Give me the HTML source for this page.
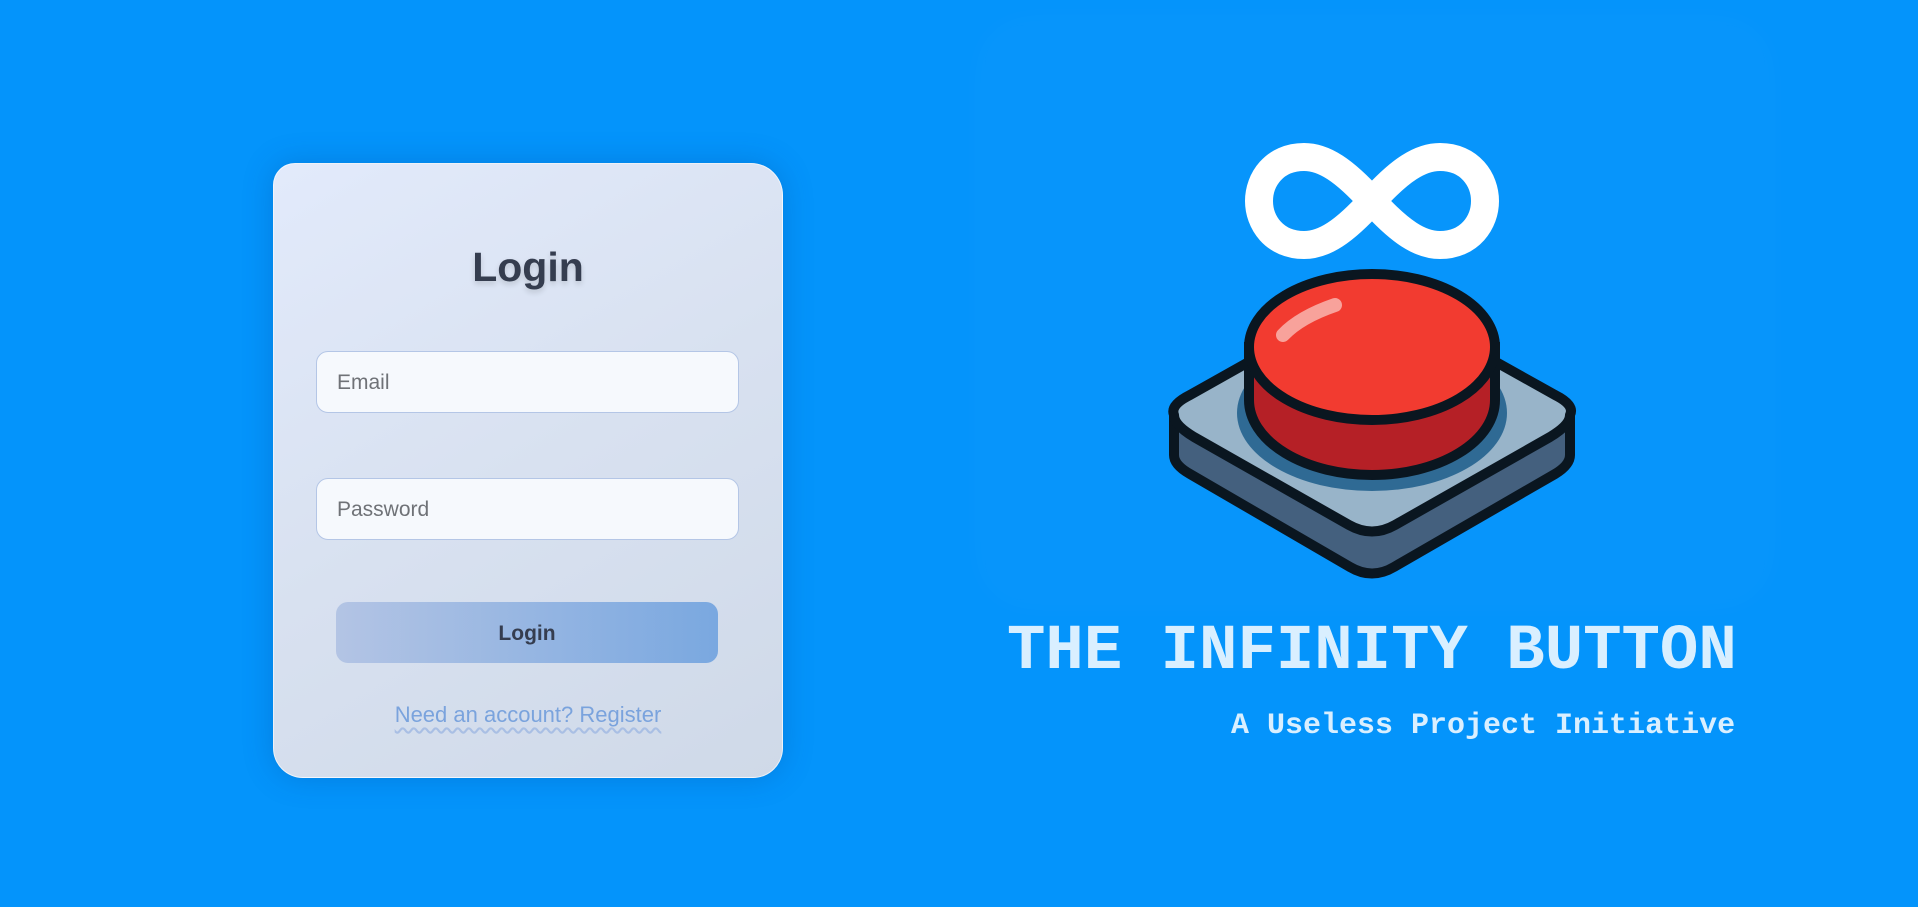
<!DOCTYPE html>
<html><head><meta charset="utf-8"><style>
html,body{margin:0;padding:0}
body{width:1918px;height:907px;background:#0494fb;position:relative;overflow:hidden;font-family:"Comic Sans MS","Liberation Sans",sans-serif}
.glow{position:absolute;left:985px;top:25px;width:780px;height:575px;border-radius:40px;background:rgba(255,255,255,0.015);box-shadow:0 0 40px rgba(255,255,255,0.04)}
.card{position:absolute;left:273px;top:163px;width:510px;height:615px;border-radius:22px 32px 30px 30px;background:linear-gradient(150deg,#e2eafb 0%,#d8e1f0 50%,#cfd9e8 100%);box-shadow:0 0 30px rgba(0,60,140,0.25);border:1px solid rgba(255,255,255,0.6);box-sizing:border-box}
.title{position:absolute;top:244px;text-align:center;font-size:41px;font-weight:bold;color:#353d4f;text-shadow:0 3px 6px rgba(0,0,0,0.15)}
.inp{position:absolute;left:316px;width:423px;height:62px;border:1px solid #b4c6e6;border-radius:12px;background:#f6f9fd;box-sizing:border-box;padding-left:20px;font-size:21px;color:#6f7277;line-height:62px}
.btn{position:absolute;left:336px;top:602px;width:382px;height:61px;border-radius:12px;background:linear-gradient(90deg,#b3c4e4,#7aa8e0);text-align:center;line-height:64px;font-size:21px;font-weight:bold;color:#353d4f}
.reg{position:absolute;left:0;width:1056px;top:702px;text-align:center;font-size:22px;color:#7aa3dd;text-decoration:underline wavy #a9bfe4;text-underline-offset:5px}
.h1{position:absolute;left:1007px;top:620px;font-family:"Liberation Mono",monospace;font-weight:bold;font-size:64px;color:#d9efff;white-space:nowrap;line-height:64px}
.h2{position:absolute;left:1231px;top:708px;font-family:"Liberation Mono",monospace;font-weight:bold;font-size:30px;color:#d9efff;white-space:nowrap;line-height:36px}
</style></head><body>
<div class="glow"></div>
<div class="card"></div>
<div class="title" style="left:273px;width:510px">Login</div>
<div class="inp" style="top:351px">Email</div>
<div class="inp" style="top:478px">Password</div>
<div class="btn">Login</div>
<div class="reg">Need an account? Register</div>
<svg style="position:absolute;left:0;top:0" width="1918" height="907" viewBox="0 0 1918 907">
<path d="M1372 201 C1400 170 1420 157 1440 157 C1470 157 1485 180 1485 201 C1485 222 1470 245 1440 245 C1420 245 1400 232 1372 201 C1344 170 1324 157 1304 157 C1274 157 1259 180 1259 201 C1259 222 1274 245 1304 245 C1324 245 1344 232 1372 201 Z" fill="none" stroke="#fff" stroke-width="28"/>
<path d="M1174 415 L1174 455 Q1174 465 1190 474 L1350 567 Q1372 580 1394 567 L1555 474 Q1570 465 1570 455 L1570 415 Z" fill="#44607e" stroke="#0a1620" stroke-width="10" stroke-linejoin="round"/>
<path d="M1174 415 Q1170 405 1190 395 L1350 305 Q1372 295 1394 305 L1555 395 Q1575 405 1570 415 Q1570 425 1550 437 L1395 525 Q1372 538 1349 525 L1194 437 Q1174 425 1174 415 Z" fill="#98b4c9" stroke="#0a1620" stroke-width="10" stroke-linejoin="round"/>
<ellipse cx="1372" cy="413" rx="135" ry="78" fill="#2f6a94"/>
<path d="M1249 347 L1249 400 A123 75 0 0 0 1495 400 L1495 347 Z" fill="#b52026" stroke="#0a1620" stroke-width="10"/>
<ellipse cx="1372" cy="347" rx="123" ry="73" fill="#f23b30" stroke="#0a1620" stroke-width="10"/>
<path d="M1283 335 Q1300 317 1335 305" fill="none" stroke="#f8a29b" stroke-width="14" stroke-linecap="round"/>
</svg>
<div class="h1">THE INFINITY BUTTON</div>
<div class="h2">A Useless Project Initiative</div>
</body></html>
